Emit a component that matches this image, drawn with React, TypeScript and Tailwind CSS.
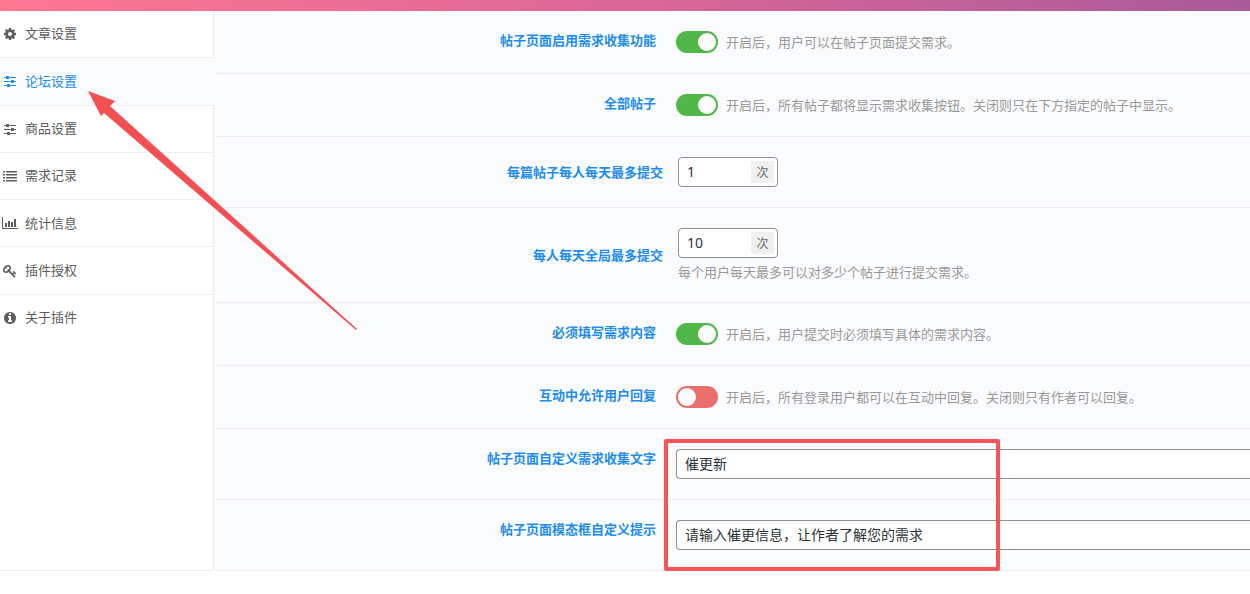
import { useState } from "react";
import clsx from "clsx";

const icons = {
  cog: (
    <path d="M1152 896q0-106-75-181t-181-75-181 75-75 181 75 181 181 75 181-75 75-181zm512-109v222q0 12-8 23t-20 13l-185 28q-19 54-39 91 35 50 107 138 10 12 10 25t-9 23q-27 37-99 108t-94 71q-12 0-26-9l-138-108q-44 23-91 38-16 136-29 186-7 28-36 28h-222q-14 0-24.5-8.5t-11.5-21.5l-28-184q-49-16-90-37l-141 107q-10 9-25 9-14 0-25-11-126-114-165-168-7-10-7-23 0-12 8-23 15-21 51-66.5t54-70.5q-27-50-41-99l-183-27q-13-2-21-12.5t-8-23.5v-222q0-12 8-23t19-13l186-28q14-46 39-92-40-57-107-138-10-12-10-24 0-10 9-23 26-36 98.5-107.5t94.5-71.5q13 0 26 10l138 107q44-23 91-38 16-136 29-186 7-28 36-28h222q14 0 24.5 8.5t11.5 21.5l28 184q49 16 90 37l142-107q9-9 24-9 13 0 25 10 129 119 165 170 7 8 7 22 0 12-8 23-15 21-51 66.5t-54 70.5q26 50 41 98l183 28q13 2 21 12.5t8 23.5z" />
  ),
  sliders: (
    <>
      <path d="M128 384h224v128H128zM800 384h864v128H800zM128 896h864v128H128zM1440 896h224v128h-224zM128 1408h352v128H128zM928 1408h736v128H928z" />
      <rect x="384" y="256" width="384" height="384" rx="64" />
      <rect x="1024" y="768" width="384" height="384" rx="64" />
      <rect x="512" y="1280" width="384" height="384" rx="64" />
    </>
  ),
  list: (
    <path d="M0 256h256v192H0zM384 256h1408v192H384zM0 640h256v192H0zM384 640h1408v192H384zM0 1024h256v192H0zM384 1024h1408v192H384zM0 1408h256v192H0zM384 1408h1408v192H384z" />
  ),
  chart: (
    <path d="M-128 128H0v1408h1920v128H-128zM256 896h256v512H256zM640 640h256v768H640zM1024 768h256v640h-256zM1408 384h256v1024h-256z" />
  ),
  key: (
    <path d="M832 512q0-80-56-136t-136-56-136 56-56 136q0 42 19 83-41-19-83-19-80 0-136 56t-56 136 56 136 136 56 136-56 56-136q0-42-19-83 41 19 83 19 80 0 136-56t56-136zm851 704q0 17-49 66t-66 49q-9 0-28.5-16t-36.5-33-38.5-40-24.5-26l-96 96 220 220q28 28 28 68 0 42-39 81t-81 39q-40 0-68-28l-671-671q-176 131-365 131-163 0-265.5-102.5t-102.5-265.5q0-160 95-313t248-248 313-95q163 0 265.5 102.5t102.5 265.5q0 189-131 365l355 355 96-96q-3-3-26-24.5t-40-38.5-33-36.5-16-28.5q0-17 49-66t66-49q13 0 23 10 6 6 46 44.5t82 79.5 86.5 86 73 78 28.5 41z" />
  ),
  info: (
    <path d="M1152 1376v-160q0-14-9-23t-23-9h-96v-512q0-14-9-23t-23-9h-320q-14 0-23 9t-9 23v160q0 14 9 23t23 9h96v320h-96q-14 0-23 9t-9 23v160q0 14 9 23t23 9h448q14 0 23-9t9-23zm-128-896v-160q0-14-9-23t-23-9h-192q-14 0-23 9t-9 23v160q0 14 9 23t23 9h192q14 0 23-9t9-23zm640 416q0 209-103 385.5t-279.5 279.5-385.5 103-385.5-103-279.5-279.5-103-385.5 103-385.5 279.5-279.5 385.5-103 385.5 103 279.5 279.5 103 385.5z" />
  ),
};

const menu: { icon: keyof typeof icons; text: string; active?: boolean }[] = [
  { icon: "cog", text: "文章设置" },
  { icon: "sliders", text: "论坛设置", active: true },
  { icon: "sliders", text: "商品设置" },
  { icon: "list", text: "需求记录" },
  { icon: "chart", text: "统计信息" },
  { icon: "key", text: "插件授权" },
  { icon: "info", text: "关于插件" },
];

function Sidebar() {
  return (
    <nav className="flex w-[214px] shrink-0 flex-col bg-white">
      <div className="flex h-[330px] flex-col">
        {menu.map((item) => (
          <a
            key={item.text}
            href="#"
            className={clsx(
              "flex flex-1 items-center gap-2 border-b border-b-[#f0f0f2] pl-[3px] text-[13px] last:border-b-0",
              item.active
                ? "bg-[#fafbfd] text-[#1e8ceb]"
                : "border-r border-r-[#ececef] text-[#5c5c5c]"
            )}
          >
            <svg viewBox="0 0 1792 1792" fill="currentColor" className="size-3.5 overflow-visible">
              {icons[item.icon]}
            </svg>
            {item.text}
          </a>
        ))}
      </div>
      <div className="grow border-r border-b border-r-[#ececef] border-b-[#ececef]" />
    </nav>
  );
}

const rowClass = "flex border-b border-[#ececef] py-5";
const labelClass = "shrink-0 text-right text-[13px] font-bold leading-[18px] text-[#1e8ceb]";

function SwitchRow({ id, label, desc, on }: { id: string; label: string; desc: string; on?: boolean }) {
  const [checked, setChecked] = useState(!!on);
  return (
    <div className={rowClass}>
      <label htmlFor={id} className={clsx(labelClass, "w-[440px]")}>{label}</label>
      <div className="ml-5 flex items-center gap-2">
        <input
          id={id}
          type="checkbox"
          role="switch"
          checked={checked}
          onChange={(e) => setChecked(e.target.checked)}
          className="h-[22px] w-[42px] shrink-0 cursor-pointer appearance-none rounded-full bg-[#e96e6c] p-0.5 before:block before:size-[18px] before:rounded-full before:bg-white checked:bg-[#50b848] checked:before:ml-5"
        />
        <span className="text-[13px] leading-5 text-[#999]">{desc}</span>
      </div>
    </div>
  );
}

function NumberRow({ id, label, value, desc }: { id: string; label: string; value: string; desc?: string }) {
  return (
    <div className={clsx(rowClass, "items-center")}>
      <label htmlFor={id} className={clsx(labelClass, "w-[447px]")}>{label}</label>
      <div className="ml-[15px]">
        <div className="flex h-[30px] w-[100px] items-center rounded border border-[#8c8f94] bg-white pr-[3px]">
          <input
            id={id}
            inputMode="numeric"
            defaultValue={value}
            className="min-w-0 flex-1 bg-transparent pl-2 text-sm text-[#2c3338] outline-none"
          />
          <span className="flex h-[22px] w-[23px] items-center justify-center rounded-xs bg-[#f0f0f1] pt-0.5 text-xs text-[#666]">
            次
          </span>
        </div>
        {desc && <p className="pt-1 text-[13px] leading-5 text-[#999]">{desc}</p>}
      </div>
    </div>
  );
}

function TextRow({ id, label, value }: { id: string; label: string; value: string }) {
  return (
    <div className={rowClass}>
      <label htmlFor={id} className={clsx(labelClass, "w-[440px]")}>{label}</label>
      <input
        id={id}
        type="text"
        defaultValue={value}
        className="ml-5 h-[30px] min-w-0 flex-1 rounded-l border border-r-0 border-[#8c8f94] bg-white px-2 pb-0.5 text-sm text-[#2c3338] outline-none"
      />
    </div>
  );
}

export default function App() {
  return (
    <main className="min-h-screen bg-white font-['Noto_Sans','Noto_Sans_CJK_SC',sans-serif]">
      <div className="h-[11px] bg-linear-to-r from-[#fd7792] via-[#db6797] to-[#a95a99]" />
      <div className="relative flex">
        <Sidebar />
        <form className="min-w-0 flex-1 bg-[#fafbfd] pl-0.5">
          <SwitchRow id="enable" label="帖子页面启用需求收集功能" desc="开启后，用户可以在帖子页面提交需求。" on />
          <SwitchRow id="all" label="全部帖子" desc="开启后，所有帖子都将显示需求收集按钮。关闭则只在下方指定的帖子中显示。" on />
          <NumberRow id="per-post" label="每篇帖子每人每天最多提交" value="1" />
          <NumberRow id="per-day" label="每人每天全局最多提交" value="10" desc="每个用户每天最多可以对多少个帖子进行提交需求。" />
          <SwitchRow id="required" label="必须填写需求内容" desc="开启后，用户提交时必须填写具体的需求内容。" on />
          <SwitchRow id="reply" label="互动中允许用户回复" desc="开启后，所有登录用户都可以在互动中回复。关闭则只有作者可以回复。" />
          <div className="relative">
            <TextRow id="button-text" label="帖子页面自定义需求收集文字" value="催更新" />
            <TextRow id="modal-tip" label="帖子页面模态框自定义提示" value="请输入催更信息，让作者了解您的需求" />
            {/* highlight frame */}
            <div className="pointer-events-none absolute top-2.5 bottom-0 left-[448px] w-[336px] rounded-xs border-4 border-[#f45558]" />
          </div>
        </form>
        {/* pointer to the active tab */}
        <svg
          viewBox="0 0 270 240"
          className="pointer-events-none absolute top-20 left-[88px] h-[240px] w-[270px]"
          fill="#f45054"
        >
          <path d="M0 0 27 10 22 15 269 238 268 239 16 22 13 25Z" />
        </svg>
      </div>
    </main>
  );
}
